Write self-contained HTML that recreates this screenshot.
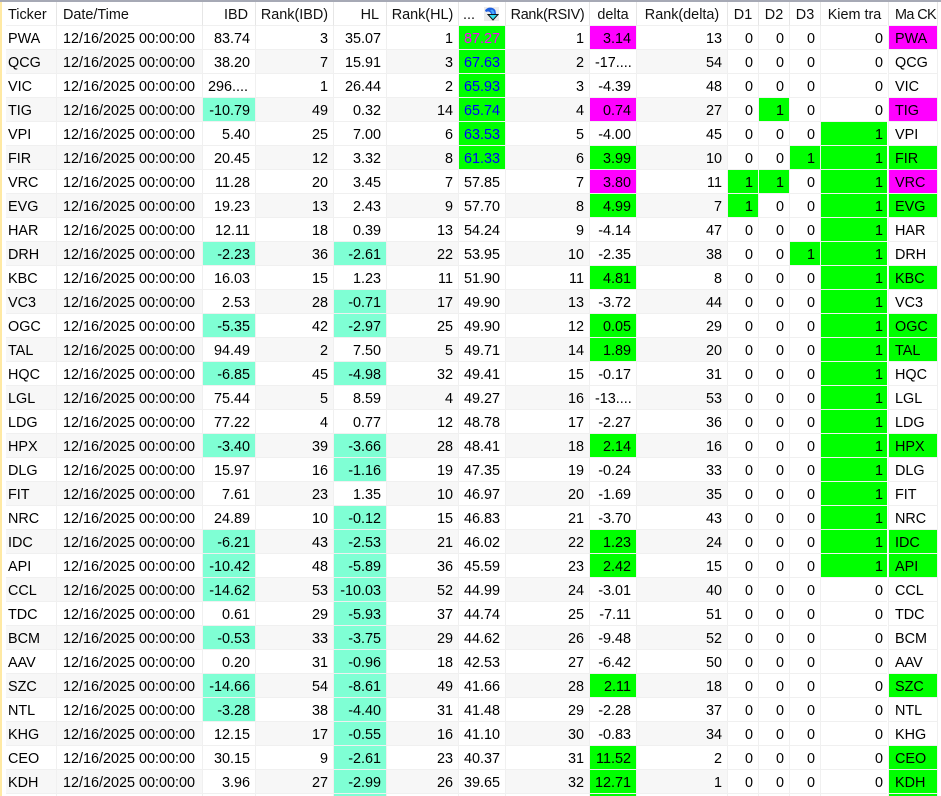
<!DOCTYPE html>
<html><head><meta charset="utf-8">
<style>
html,body{margin:0;padding:0;background:#fff;width:941px;height:796px;overflow:hidden}
#wrap{position:absolute;left:0;top:0;width:941px;height:796px;overflow:hidden;background:#fff}
#top{position:absolute;left:0;top:0;width:941px;height:2px;background:#a6a9b5}
#strip{position:absolute;left:0;top:2px;width:2px;height:794px;background:#ffe9a3}
table{position:absolute;left:6px;top:2px;width:932px;border-collapse:separate;border-spacing:0;table-layout:fixed;font:14.4px "Liberation Sans",sans-serif;color:#000}
th,td{height:19px;padding:4px 5px 0 0;border-right:1px solid #f0f0f0;border-bottom:1px solid #f0f0f0;background-clip:padding-box;white-space:nowrap;overflow:hidden;text-align:right;font-weight:normal;box-sizing:content-box;line-height:19px}
th{border-right-color:#e6e6e6;color:#111}
th.c{text-align:center;padding-right:0}
th.r{padding-right:7px}
.l{text-align:left;padding-right:0;padding-left:6px}
.t{text-align:left;padding-right:0;padding-left:2px}
.e{text-align:left;padding-right:0;padding-left:5px}
tbody tr:nth-child(even) td:nth-child(1),tbody tr:nth-child(even) td:nth-child(2),tbody tr:nth-child(even) td:nth-child(4),tbody tr:nth-child(even) td:nth-child(6),tbody tr:nth-child(even) td:nth-child(8),tbody tr:nth-child(even) td:nth-child(10){background-color:#f7f7f7}
tbody td.a,tbody tr:nth-child(even) td.a{background-color:#7fffd4}
tbody td.g,tbody tr:nth-child(even) td.g{background-color:#00ff00}
tbody td.m,tbody tr:nth-child(even) td.m{background-color:#ff00ff}
td.b{color:#0000ff}
td.p{color:#ff00ff}
tbody td:nth-child(7){padding-right:0;text-align:center}
#gap{position:absolute;left:887px;top:2px;width:1px;height:794px;background:#fff}
svg{position:absolute;left:484px;top:7px}
</style></head><body>
<div id="wrap">
<table>
<colgroup><col style="width:51px"><col style="width:146px"><col style="width:53px"><col style="width:78px"><col style="width:53px"><col style="width:72px"><col style="width:47px"><col style="width:84px"><col style="width:47px"><col style="width:91px"><col style="width:31px"><col style="width:31px"><col style="width:31px"><col style="width:68px"><col style="width:49px"></colgroup>
<thead><tr><th class="t">Ticker</th><th class="l">Date/Time</th><th class="r">IBD</th><th class="c">Rank(IBD)</th><th class="r">HL</th><th class="c">Rank(HL)</th><th class="l" style="padding-left:4px">...</th><th class="c" style="letter-spacing:-.3px">Rank(RSIV)</th><th class="c">delta</th><th class="c">Rank(delta)</th><th class="c">D1</th><th class="c">D2</th><th class="c">D3</th><th class="c">Kiem tra</th><th class="l" style="letter-spacing:-.6px">Ma CK</th></tr></thead>
<tbody>
<tr><td class="t">PWA</td><td class="l">12/16/2025 00:00:00</td><td>83.74</td><td>3</td><td>35.07</td><td>1</td><td class="g p">87.27</td><td>1</td><td class="m">3.14</td><td>13</td><td>0</td><td>0</td><td>0</td><td>0</td><td class="l m">PWA</td></tr>
<tr><td class="t">QCG</td><td class="l">12/16/2025 00:00:00</td><td>38.20</td><td>7</td><td>15.91</td><td>3</td><td class="g b">67.63</td><td>2</td><td class="e">-17....</td><td>54</td><td>0</td><td>0</td><td>0</td><td>0</td><td class="l">QCG</td></tr>
<tr><td class="t">VIC</td><td class="l">12/16/2025 00:00:00</td><td class="e">296....</td><td>1</td><td>26.44</td><td>2</td><td class="g b">65.93</td><td>3</td><td>-4.39</td><td>48</td><td>0</td><td>0</td><td>0</td><td>0</td><td class="l">VIC</td></tr>
<tr><td class="t">TIG</td><td class="l">12/16/2025 00:00:00</td><td class="a">-10.79</td><td>49</td><td>0.32</td><td>14</td><td class="g b">65.74</td><td>4</td><td class="m">0.74</td><td>27</td><td>0</td><td class="g">1</td><td>0</td><td>0</td><td class="l m">TIG</td></tr>
<tr><td class="t">VPI</td><td class="l">12/16/2025 00:00:00</td><td>5.40</td><td>25</td><td>7.00</td><td>6</td><td class="g b">63.53</td><td>5</td><td>-4.00</td><td>45</td><td>0</td><td>0</td><td>0</td><td class="g">1</td><td class="l">VPI</td></tr>
<tr><td class="t">FIR</td><td class="l">12/16/2025 00:00:00</td><td>20.45</td><td>12</td><td>3.32</td><td>8</td><td class="g b">61.33</td><td>6</td><td class="g">3.99</td><td>10</td><td>0</td><td>0</td><td class="g">1</td><td class="g">1</td><td class="l g">FIR</td></tr>
<tr><td class="t">VRC</td><td class="l">12/16/2025 00:00:00</td><td>11.28</td><td>20</td><td>3.45</td><td>7</td><td>57.85</td><td>7</td><td class="m">3.80</td><td>11</td><td class="g">1</td><td class="g">1</td><td>0</td><td class="g">1</td><td class="l m">VRC</td></tr>
<tr><td class="t">EVG</td><td class="l">12/16/2025 00:00:00</td><td>19.23</td><td>13</td><td>2.43</td><td>9</td><td>57.70</td><td>8</td><td class="g">4.99</td><td>7</td><td class="g">1</td><td>0</td><td>0</td><td class="g">1</td><td class="l g">EVG</td></tr>
<tr><td class="t">HAR</td><td class="l">12/16/2025 00:00:00</td><td>12.11</td><td>18</td><td>0.39</td><td>13</td><td>54.24</td><td>9</td><td>-4.14</td><td>47</td><td>0</td><td>0</td><td>0</td><td class="g">1</td><td class="l">HAR</td></tr>
<tr><td class="t">DRH</td><td class="l">12/16/2025 00:00:00</td><td class="a">-2.23</td><td>36</td><td class="a">-2.61</td><td>22</td><td>53.95</td><td>10</td><td>-2.35</td><td>38</td><td>0</td><td>0</td><td class="g">1</td><td class="g">1</td><td class="l">DRH</td></tr>
<tr><td class="t">KBC</td><td class="l">12/16/2025 00:00:00</td><td>16.03</td><td>15</td><td>1.23</td><td>11</td><td>51.90</td><td>11</td><td class="g">4.81</td><td>8</td><td>0</td><td>0</td><td>0</td><td class="g">1</td><td class="l g">KBC</td></tr>
<tr><td class="t">VC3</td><td class="l">12/16/2025 00:00:00</td><td>2.53</td><td>28</td><td class="a">-0.71</td><td>17</td><td>49.90</td><td>13</td><td>-3.72</td><td>44</td><td>0</td><td>0</td><td>0</td><td class="g">1</td><td class="l">VC3</td></tr>
<tr><td class="t">OGC</td><td class="l">12/16/2025 00:00:00</td><td class="a">-5.35</td><td>42</td><td class="a">-2.97</td><td>25</td><td>49.90</td><td>12</td><td class="g">0.05</td><td>29</td><td>0</td><td>0</td><td>0</td><td class="g">1</td><td class="l g">OGC</td></tr>
<tr><td class="t">TAL</td><td class="l">12/16/2025 00:00:00</td><td>94.49</td><td>2</td><td>7.50</td><td>5</td><td>49.71</td><td>14</td><td class="g">1.89</td><td>20</td><td>0</td><td>0</td><td>0</td><td class="g">1</td><td class="l g">TAL</td></tr>
<tr><td class="t">HQC</td><td class="l">12/16/2025 00:00:00</td><td class="a">-6.85</td><td>45</td><td class="a">-4.98</td><td>32</td><td>49.41</td><td>15</td><td>-0.17</td><td>31</td><td>0</td><td>0</td><td>0</td><td class="g">1</td><td class="l">HQC</td></tr>
<tr><td class="t">LGL</td><td class="l">12/16/2025 00:00:00</td><td>75.44</td><td>5</td><td>8.59</td><td>4</td><td>49.27</td><td>16</td><td class="e">-13....</td><td>53</td><td>0</td><td>0</td><td>0</td><td class="g">1</td><td class="l">LGL</td></tr>
<tr><td class="t">LDG</td><td class="l">12/16/2025 00:00:00</td><td>77.22</td><td>4</td><td>0.77</td><td>12</td><td>48.78</td><td>17</td><td>-2.27</td><td>36</td><td>0</td><td>0</td><td>0</td><td class="g">1</td><td class="l">LDG</td></tr>
<tr><td class="t">HPX</td><td class="l">12/16/2025 00:00:00</td><td class="a">-3.40</td><td>39</td><td class="a">-3.66</td><td>28</td><td>48.41</td><td>18</td><td class="g">2.14</td><td>16</td><td>0</td><td>0</td><td>0</td><td class="g">1</td><td class="l g">HPX</td></tr>
<tr><td class="t">DLG</td><td class="l">12/16/2025 00:00:00</td><td>15.97</td><td>16</td><td class="a">-1.16</td><td>19</td><td>47.35</td><td>19</td><td>-0.24</td><td>33</td><td>0</td><td>0</td><td>0</td><td class="g">1</td><td class="l">DLG</td></tr>
<tr><td class="t">FIT</td><td class="l">12/16/2025 00:00:00</td><td>7.61</td><td>23</td><td>1.35</td><td>10</td><td>46.97</td><td>20</td><td>-1.69</td><td>35</td><td>0</td><td>0</td><td>0</td><td class="g">1</td><td class="l">FIT</td></tr>
<tr><td class="t">NRC</td><td class="l">12/16/2025 00:00:00</td><td>24.89</td><td>10</td><td class="a">-0.12</td><td>15</td><td>46.83</td><td>21</td><td>-3.70</td><td>43</td><td>0</td><td>0</td><td>0</td><td class="g">1</td><td class="l">NRC</td></tr>
<tr><td class="t">IDC</td><td class="l">12/16/2025 00:00:00</td><td class="a">-6.21</td><td>43</td><td class="a">-2.53</td><td>21</td><td>46.02</td><td>22</td><td class="g">1.23</td><td>24</td><td>0</td><td>0</td><td>0</td><td class="g">1</td><td class="l g">IDC</td></tr>
<tr><td class="t">API</td><td class="l">12/16/2025 00:00:00</td><td class="a">-10.42</td><td>48</td><td class="a">-5.89</td><td>36</td><td>45.59</td><td>23</td><td class="g">2.42</td><td>15</td><td>0</td><td>0</td><td>0</td><td class="g">1</td><td class="l g">API</td></tr>
<tr><td class="t">CCL</td><td class="l">12/16/2025 00:00:00</td><td class="a">-14.62</td><td>53</td><td class="a">-10.03</td><td>52</td><td>44.99</td><td>24</td><td>-3.01</td><td>40</td><td>0</td><td>0</td><td>0</td><td>0</td><td class="l">CCL</td></tr>
<tr><td class="t">TDC</td><td class="l">12/16/2025 00:00:00</td><td>0.61</td><td>29</td><td class="a">-5.93</td><td>37</td><td>44.74</td><td>25</td><td>-7.11</td><td>51</td><td>0</td><td>0</td><td>0</td><td>0</td><td class="l">TDC</td></tr>
<tr><td class="t">BCM</td><td class="l">12/16/2025 00:00:00</td><td class="a">-0.53</td><td>33</td><td class="a">-3.75</td><td>29</td><td>44.62</td><td>26</td><td>-9.48</td><td>52</td><td>0</td><td>0</td><td>0</td><td>0</td><td class="l">BCM</td></tr>
<tr><td class="t">AAV</td><td class="l">12/16/2025 00:00:00</td><td>0.20</td><td>31</td><td class="a">-0.96</td><td>18</td><td>42.53</td><td>27</td><td>-6.42</td><td>50</td><td>0</td><td>0</td><td>0</td><td>0</td><td class="l">AAV</td></tr>
<tr><td class="t">SZC</td><td class="l">12/16/2025 00:00:00</td><td class="a">-14.66</td><td>54</td><td class="a">-8.61</td><td>49</td><td>41.66</td><td>28</td><td class="g">2.11</td><td>18</td><td>0</td><td>0</td><td>0</td><td>0</td><td class="l g">SZC</td></tr>
<tr><td class="t">NTL</td><td class="l">12/16/2025 00:00:00</td><td class="a">-3.28</td><td>38</td><td class="a">-4.40</td><td>31</td><td>41.48</td><td>29</td><td>-2.28</td><td>37</td><td>0</td><td>0</td><td>0</td><td>0</td><td class="l">NTL</td></tr>
<tr><td class="t">KHG</td><td class="l">12/16/2025 00:00:00</td><td>12.15</td><td>17</td><td class="a">-0.55</td><td>16</td><td>41.10</td><td>30</td><td>-0.83</td><td>34</td><td>0</td><td>0</td><td>0</td><td>0</td><td class="l">KHG</td></tr>
<tr><td class="t">CEO</td><td class="l">12/16/2025 00:00:00</td><td>30.15</td><td>9</td><td class="a">-2.61</td><td>23</td><td>40.37</td><td>31</td><td class="g">11.52</td><td>2</td><td>0</td><td>0</td><td>0</td><td>0</td><td class="l g">CEO</td></tr>
<tr><td class="t">KDH</td><td class="l">12/16/2025 00:00:00</td><td>3.96</td><td>27</td><td class="a">-2.99</td><td>26</td><td>39.65</td><td>32</td><td class="g">12.71</td><td>1</td><td>0</td><td>0</td><td>0</td><td>0</td><td class="l g">KDH</td></tr>
<tr><td></td><td></td><td></td><td></td><td class="a"></td><td></td><td></td><td></td><td class="g"></td><td></td><td></td><td></td><td></td><td></td><td class="g"></td></tr>
</tbody></table>
<div id="top"></div><div id="strip"></div><div id="gap"></div>
<svg width="15" height="14" viewBox="0 0 15 14">
<rect width="15" height="14" fill="#ececec"/>
<path d="M1 3.5 C3 0 9 -0.5 11.5 3.5 L12 7 L7 7 C6.5 4.5 4 4 2 5 Z" fill="#1e5fe0"/>
<path d="M8 2.5 C10 3.5 10.5 5 10.5 7 L8 7 C7.8 5.5 7.5 4 6 3.5 Z" fill="#45a8ff"/>
<path d="M4 7.5 L14 7.5 L9 13 Z" fill="#35dff0" stroke="#101418" stroke-width="1"/>
</svg>
</div>
</body></html>
